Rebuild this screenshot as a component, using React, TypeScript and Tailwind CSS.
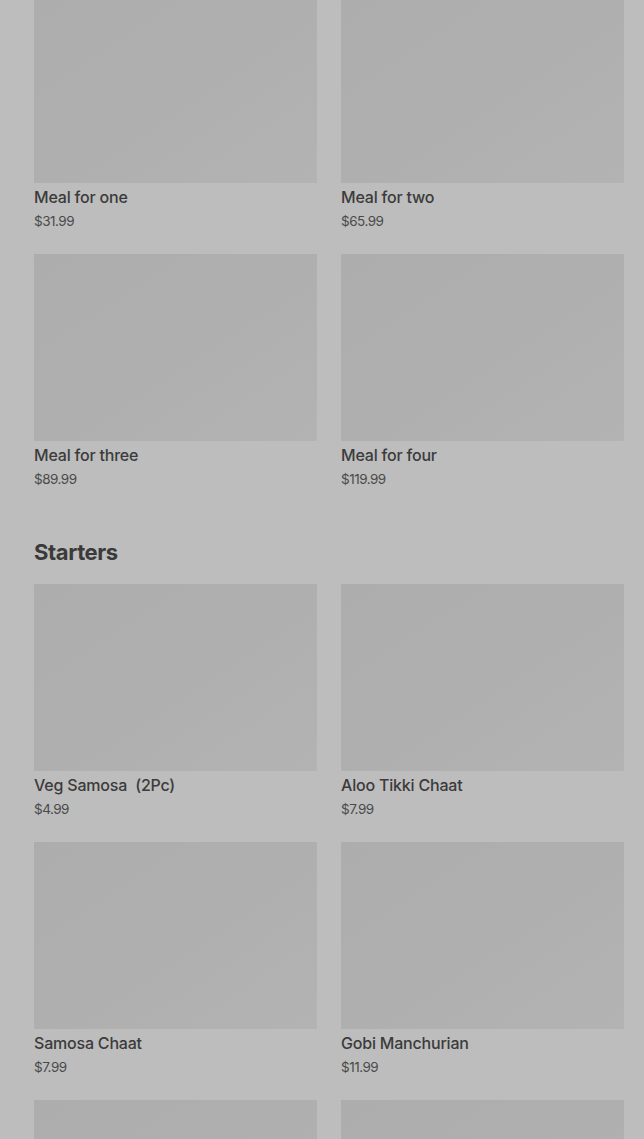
import React from 'react';

interface Item {
  name: string;
  price: string;
}

const meals: Item[] = [
  { name: 'Meal for one', price: '$31.99' },
  { name: 'Meal for two', price: '$65.99' },
  { name: 'Meal for three', price: '$89.99' },
  { name: 'Meal for four', price: '$119.99' },
];

const starters: Item[] = [
  { name: 'Veg Samosa  (2Pc)', price: '$4.99' },
  { name: 'Aloo Tikki Chaat', price: '$7.99' },
  { name: 'Samosa Chaat', price: '$7.99' },
  { name: 'Gobi Manchurian', price: '$11.99' },
];

const Photo = () => (
  <div className="h-[187px] w-full bg-gradient-to-br from-[#adadad] via-[#afafaf] to-[#b3b3b3]" />
);

const Card = ({ item }: { item: Item }) => (
  <div className="flex flex-col">
    <Photo />
    <div className="mt-[2px] text-[16px] leading-[24px] font-medium text-[#3b3b3b] tracking-[-0.2px] whitespace-pre">{item.name}</div>
    <div className="mt-[2px] text-[13.5px] leading-[20px] text-[#4a4a4a] tracking-[-0.5px]">{item.price}</div>
  </div>
);

export default function App() {
  return (
    <div className="h-[1139px] bg-[#bdbdbd] pl-[34px] pr-[20px] overflow-hidden font-['Inter','Liberation_Sans',sans-serif]">
      <div className="-mt-[4px] grid grid-cols-2 gap-x-[24px] gap-y-[23px]">
        {meals.map((m) => (
          <Card key={m.name} item={m} />
        ))}
      </div>
      <h2 className="mt-[49px] text-[22px] leading-[28px] font-bold text-[#3a3a3a] tracking-[-0.4px]">Starters</h2>
      <div className="mt-[18px] grid grid-cols-2 gap-x-[24px] gap-y-[23px]">
        {starters.map((m) => (
          <Card key={m.name} item={m} />
        ))}
        {/* next row only shows the photos before the fold */}
        <Photo />
        <Photo />
      </div>
    </div>
  );
}
